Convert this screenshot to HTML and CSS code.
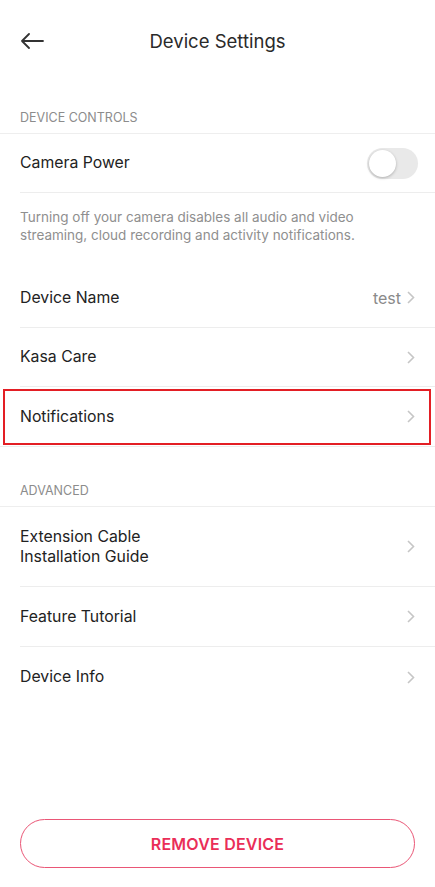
FILE: index.html
```html
<!DOCTYPE html>
<html lang="en">
<head>
    <meta charset="UTF-8">
    <meta name="viewport" content="width=device-width, initial-scale=1.0">
    <title>Device Settings</title>
    <link rel="stylesheet" href="styles.css">
</head>
<body>

    <div class="page">
        <header class="top-bar">
            <svg class="back-icon" width="24" height="16" viewBox="0 0 24 16">
                <path d="M23 8H2M9 1L2 8l7 7" fill="none" stroke="#333" stroke-width="1.8" stroke-linecap="round" stroke-linejoin="round"/>
            </svg>
            <h1 class="title">Device Settings</h1>
        </header>

        <div class="section-label first">DEVICE CONTROLS</div>

        <div class="row short">
            <span class="row-text">Camera Power</span>
            <span class="toggle"><span class="knob"></span></span>
        </div>
        <p class="hint">Turning off your camera disables all audio and video streaming, cloud recording and activity notifications.</p>

        <div class="row top-line">
            <span class="row-text">Device Name</span>
            <span class="row-value">test</span>
            <svg class="chevron" width="8" height="13" viewBox="0 0 8 13"><path d="M1 1l5.5 5.5L1 12" fill="none" stroke="#c6c6c6" stroke-width="1.6"/></svg>
        </div>
        <div class="row short">
            <span class="row-text">Kasa Care</span>
            <svg class="chevron" width="8" height="13" viewBox="0 0 8 13"><path d="M1 1l5.5 5.5L1 12" fill="none" stroke="#c6c6c6" stroke-width="1.6"/></svg>
        </div>
        <div class="row last highlighted">
            <span class="row-text">Notifications</span>
            <svg class="chevron" width="8" height="13" viewBox="0 0 8 13"><path d="M1 1l5.5 5.5L1 12" fill="none" stroke="#c6c6c6" stroke-width="1.6"/></svg>
        </div>

        <div class="section-label">ADVANCED</div>

        <div class="row tall">
            <span class="row-text">Extension Cable<br>Installation Guide</span>
            <svg class="chevron" width="8" height="13" viewBox="0 0 8 13"><path d="M1 1l5.5 5.5L1 12" fill="none" stroke="#c6c6c6" stroke-width="1.6"/></svg>
        </div>
        <div class="row">
            <span class="row-text">Feature Tutorial</span>
            <svg class="chevron" width="8" height="13" viewBox="0 0 8 13"><path d="M1 1l5.5 5.5L1 12" fill="none" stroke="#c6c6c6" stroke-width="1.6"/></svg>
        </div>
        <div class="row no-line">
            <span class="row-text">Device Info</span>
            <svg class="chevron" width="8" height="13" viewBox="0 0 8 13"><path d="M1 1l5.5 5.5L1 12" fill="none" stroke="#c6c6c6" stroke-width="1.6"/></svg>
        </div>

        <div class="spacer"></div>

        <button class="remove-btn">REMOVE DEVICE</button>
    </div>

</body>
</html>
```

FILE: styles.css
```css
* { box-sizing: border-box; }

body {
    margin: 0;
    font-family: Inter, "Noto Sans", sans-serif;
    background: white;
    color: #222;
}

.page {
    width: 435px;
    height: 887px;
    display: flex;
    flex-direction: column;
}

/* Header */
.top-bar {
    height: 82px;
    display: flex;
    align-items: center;
    justify-content: center;
    position: relative;
}
.back-icon {
    position: absolute;
    left: 20px;
    top: 33px;
}
.title {
    margin: 0;
    font-size: 18.5px;
    font-weight: 400;
    color: #2a2a2a;
}

/* Section labels */
.section-label {
    padding: 36px 20px 7px;
    font-size: 12.5px;
    line-height: 16px;
    color: #8c8c8c;
    border-bottom: 1px solid #eeeeee;
}
.section-label.first { padding-top: 28px; }

/* Rows */
.row {
    height: 60px;
    margin-left: 20px;
    padding-right: 20px;
    display: flex;
    align-items: center;
    gap: 6px;
    border-bottom: 1px solid #ededed;
}
.row.short { height: 59px; }
.row.tall { height: 80px; }
.row.no-line { border-bottom: none; }
.row.last {
    margin-left: 0;
    padding-left: 20px;
}
.row-text {
    flex: 1;
    font-size: 15.8px;
    line-height: 20px;
    color: #222;
}
.row-value {
    font-size: 16px;
    color: #8a8a8a;
}
.chevron { flex-shrink: 0; }

.highlighted { position: relative; }
.highlighted::after {
    content: "";
    position: absolute;
    left: 3px;
    right: 4px;
    top: 2px;
    bottom: 1px;
    border: 2px solid #e31e24;
}

/* Toggle */
.toggle {
    width: 51px;
    height: 31px;
    border-radius: 16px;
    background: #e9e9e9;
    padding: 2px;
    margin-right: -3px;
}
.knob {
    display: block;
    width: 27px;
    height: 27px;
    border-radius: 50%;
    background: white;
    box-shadow: 0 1px 3px rgba(0, 0, 0, 0.25);
}

.hint {
    margin: 0;
    padding: 15px 20px 0;
    height: 75px;
    font-size: 13.5px;
    line-height: 18px;
    color: #8f8f8f;
}

.spacer { flex: 1; }

.remove-btn {
    margin: 0 20px 19px;
    height: 49px;
    border: 1.5px solid #ea5676;
    border-radius: 25px;
    background: white;
    color: #ea2e58;
    font-family: Inter, "Noto Sans", sans-serif;
    font-size: 16px;
    font-weight: 600;
    letter-spacing: 0.2px;
}
```
